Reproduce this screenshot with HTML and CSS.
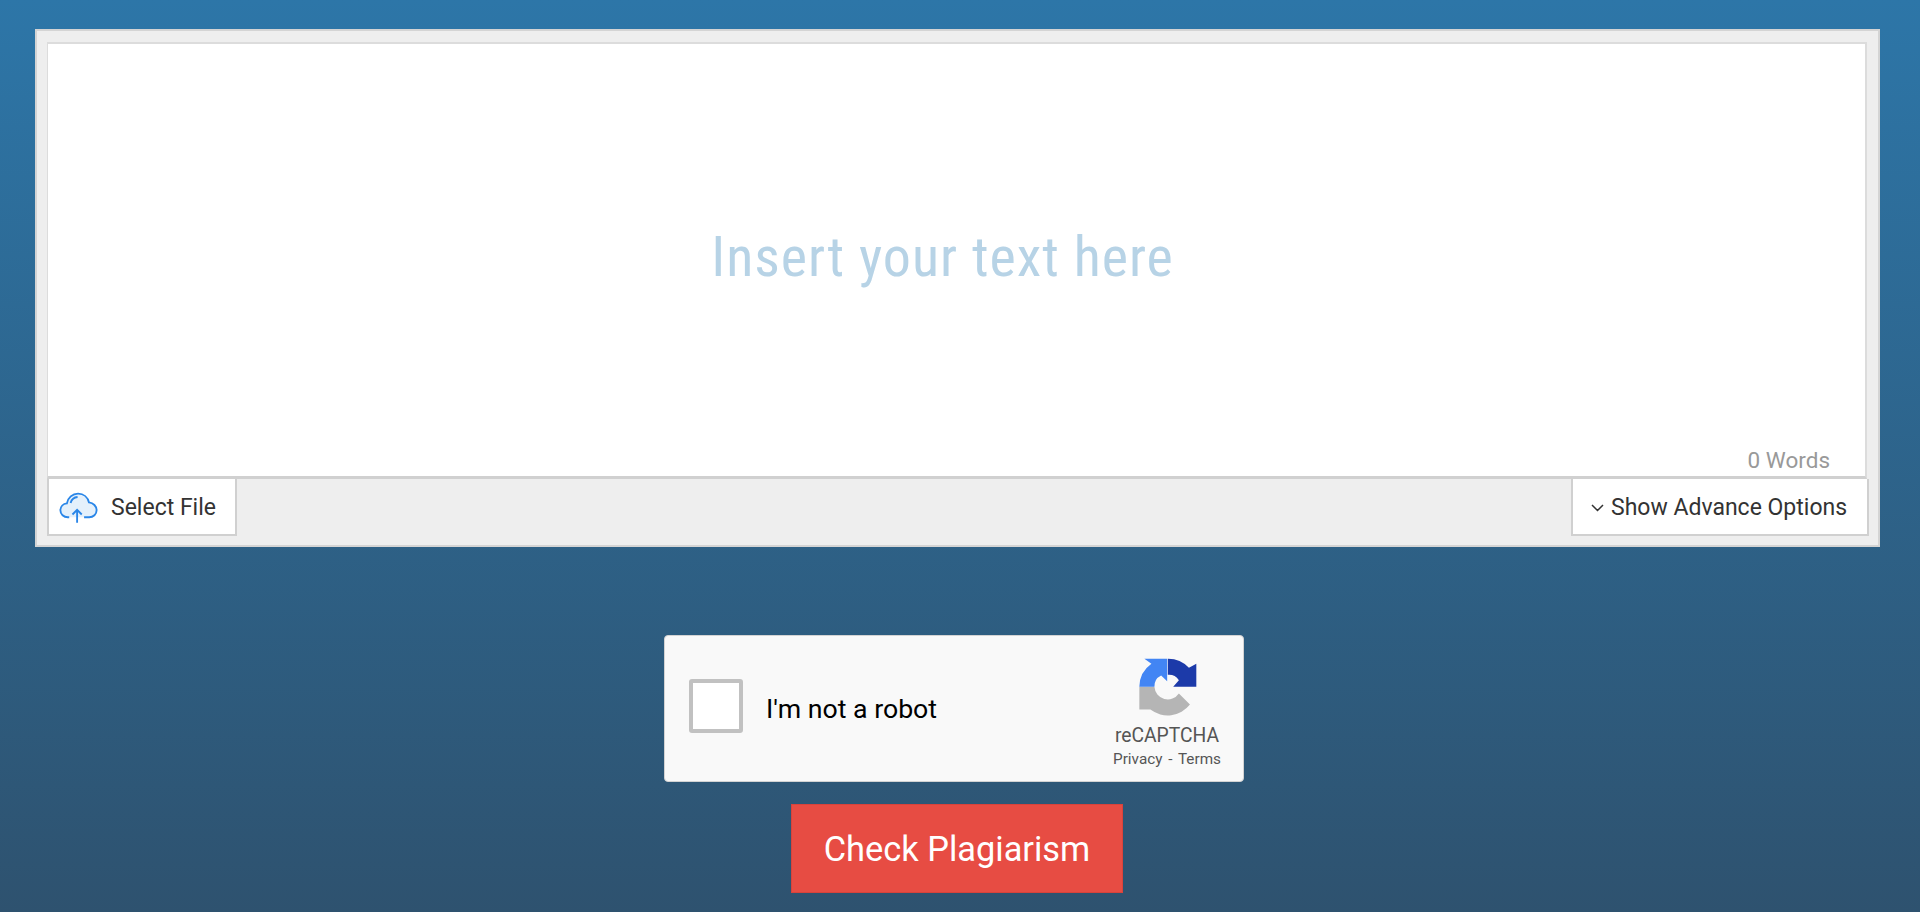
FILE: index.html
```html
<!DOCTYPE html>
<html lang="en">
<head>
  <meta charset="UTF-8">
  <meta name="viewport" content="width=device-width, initial-scale=1">
  <title>Plagiarism Checker</title>
  <link rel="stylesheet" href="styles.css">
</head>
<body>

  <div class="panel">
    <div class="editor">
      <div class="placeholder">Insert your text here</div>
      <div class="word-count">0 Words</div>
    </div>
    <div class="toolbar">
      <div class="tool-btn select-file">
        <svg class="cloud" width="39" height="32" viewBox="0 0 42 34">
          <path class="cloud-shape" d="M11 27H9.500C5 27 1.500 23.700 1.500 19.500C1.500 15.500 4.500 12.500 8.500 12C9.500 6 14.500 1.500 20.500 1.500C26.500 1.500 31 5.500 32.300 11C37 11.500 40.500 15 40.500 19.500C40.500 23.700 37 27 32.500 27H27"/>
          <path class="cloud-line" d="M12.500 11.500C13.500 8 16.500 5.500 20 5.200"/>
          <path class="cloud-line" d="M19.500 33V19M14.500 24L19.500 19L24.500 24"/>
        </svg>
        <span>Select File</span>
      </div>
      <div class="tool-btn advance">
        <svg class="chevron" width="13" height="8" viewBox="0 0 13 8"><path d="M1 1L6.500 6.500L12 1"/></svg>
        <span>Show Advance Options</span>
      </div>
    </div>
  </div>

  <div class="captcha">
    <div class="captcha-box"></div>
    <div class="captcha-label">I'm not a robot</div>
    <div class="captcha-brand">
      <svg class="captcha-logo" width="62" height="62" viewBox="200 80 185 185">
        <path fill="#b5b5b5" d="M207 172L252 172A40 40 0 0 0 325 192L358 225A85 85 0 0 1 240 240L207 240Z"/>
        <path fill="#4285f4" d="M207 172A85 85 0 0 1 243 103L222 88L290 88L290 155L272 138A36 36 0 0 0 252 172Z"/>
        <path fill="#1c3aa9" d="M292 88A85 85 0 0 1 355 115L377 103L377 172L308 172L325 152A36 36 0 0 0 292 136Z"/>
      </svg>
      <div class="captcha-name">reCAPTCHA</div>
      <div class="captcha-links">Privacy - Terms</div>
    </div>
  </div>

  <button class="check-btn" type="button">Check Plagiarism</button>

</body>
</html>
```

FILE: styles.css
```css
body {
  margin: 0;
  height: 912px;
  overflow: hidden;
  font-family: 'Roboto', 'Liberation Sans', sans-serif;
  background: linear-gradient(to bottom, #2d76a8, #2e526f);
  display: flex;
  flex-direction: column;
  align-items: flex-start;
}

.panel {
  box-sizing: border-box;
  width: 1845px;
  height: 518px;
  margin-top: 29px;
  margin-left: 35px;
  padding: 11px 11px 0 10px;
  background: #eeeeee;
  border: 2px solid #d4d4d4;
}

.editor {
  box-sizing: border-box;
  height: 437px;
  background: #fff;
  border: 2px solid #dcdcdc;
  border-bottom: 3px solid #d0d0d0;
  border-left-width: 1px;
  display: flex;
  align-items: center;
  justify-content: center;
  position: relative;
}

.placeholder {
  font-size: 56px;
  font-stretch: condensed;
  letter-spacing: 1px;
  color: #b7d3e6;
  margin-top: -6px;
  margin-left: -28px;
}

.word-count {
  position: absolute;
  right: 35px;
  bottom: 3px;
  font-size: 22.500px;
  color: #999;
}

.toolbar {
  display: flex;
  justify-content: space-between;
}

.tool-btn {
  box-sizing: border-box;
  height: 57px;
  padding-top: 2px;
  background: #fff;
  border: 2px solid #d0d0d0;
  border-top: none;
  display: flex;
  align-items: center;
  font-size: 23px;
  color: #333;
}

.select-file {
  width: 190px;
  padding-left: 10px;
  gap: 13px;
}

.advance {
  width: 298px;
  margin-right: -2px;
  padding-left: 18px;
  gap: 7px;
}

.cloud {
  flex: none;
  margin-top: 1px;
}

.cloud-shape {
  fill: #e4f0fb;
  stroke: #2a86e8;
  stroke-width: 2;
}

.cloud-line {
  fill: none;
  stroke: #2a86e8;
  stroke-width: 2;
}

.chevron path {
  fill: none;
  stroke: #333;
  stroke-width: 1.500;
}

.captcha {
  box-sizing: border-box;
  width: 580px;
  height: 147px;
  margin-top: 88px;
  margin-left: 664px;
  background: #f9f9f9;
  border: 1px solid #d3d3d3;
  border-radius: 4px;
  display: flex;
  align-items: center;
  position: relative;
  padding-left: 24px;
}

.captcha-box {
  box-sizing: border-box;
  width: 54px;
  height: 54px;
  margin-top: -5px;
  background: #fff;
  border: 4px solid #c1c1c1;
  border-radius: 3px;
}

.captcha-label {
  font-size: 26.700px;
  color: #000;
  margin-left: 23px;
}

.captcha-brand {
  margin-left: auto;
  width: 120px;
  margin-right: 16px;
  display: flex;
  flex-direction: column;
  align-items: center;
  color: #555;
}

.captcha-logo {
  margin-top: 7px;
  margin-left: 1px;
}

.captcha-name {
  font-size: 19.300px;
  margin-top: 6px;
}

.captcha-links {
  font-size: 15.300px;
  word-spacing: 2px;
  margin-top: 3px;
}

.check-btn {
  box-sizing: border-box;
  width: 332px;
  height: 89px;
  margin-top: 22px;
  margin-left: 791px;
  background: #e74c43;
  border: 1px solid #d8433b;
  color: #fff;
  font-family: inherit;
  font-size: 34.400px;
}
```
